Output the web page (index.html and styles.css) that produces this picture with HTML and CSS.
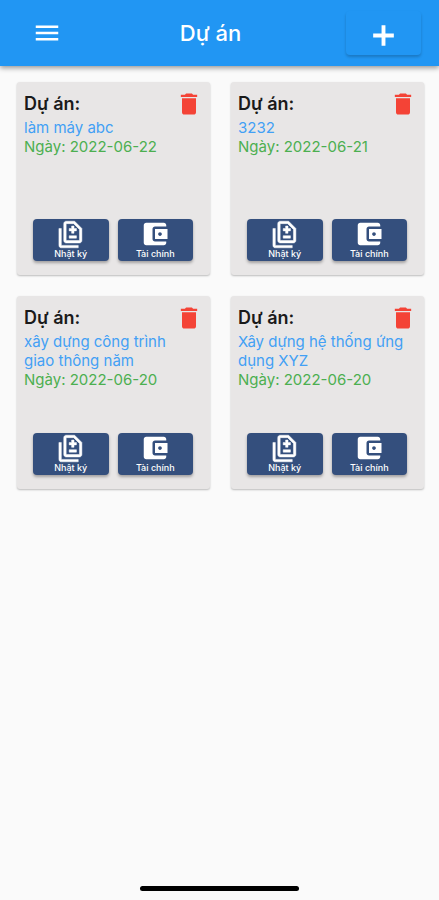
FILE: index.html
```html
<!DOCTYPE html>
<html lang="vi">
<head>
<meta charset="utf-8">
<meta name="viewport" content="width=device-width, initial-scale=1">
<title>Dự án</title>
<link rel="stylesheet" href="styles.css">
</head>
<body>
<svg class="sprite" aria-hidden="true">
  <symbol id="trash" viewBox="0 0 24 24"><path d="M6 19c0 1.100.9 2 2 2h8c1.100 0 2-.9 2-2V7H6v12zM19 4h-3.500l-1-1h-5l-1 1H5v2h14V4z"/></symbol>
  <symbol id="diary" viewBox="0 0 24 24"><path d="M18 23H4c-1.100 0-2-.9-2-2V7h2v14h14v2zM14.500 7V5h-2v2h-2v2h2v2h2V9h2V7h-2zM16.500 13h-6v2h6v-2zM15 1H8C6.900 1 6 1.900 6 3v14c0 1.100.9 2 2 2h11c1.100 0 2-.9 2-2V7l-6-6zM19 17H8V3h6.170L19 7.830V17z"/></symbol>
  <symbol id="wallet" viewBox="0 0 24 24"><path d="M21 18v1c0 1.100-.9 2-2 2H5c-1.110 0-2-.9-2-2V5c0-1.100.89-2 2-2h14c1.100 0 2 .9 2 2v1h-9c-1.110 0-2 .9-2 2v8c0 1.100.89 2 2 2h9zm-9-2h10V8H12v8zm4-2.500c-.83 0-1.500-.67-1.500-1.500s.67-1.500 1.500-1.500 1.500.67 1.500 1.500-.67 1.500-1.500 1.500z"/></symbol>
</svg>
<header class="bar">
  <button class="menu" aria-label="Menu"><svg viewBox="0 0 24 24"><path d="M3 18h18v-2H3v2zm0-5h18v-2H3v2zm0-7v2h18V6H3z"/></svg></button>
  <h1 class="title">Dự án</h1>
  <button class="add" aria-label="Thêm"><svg viewBox="0 0 24 24"><path d="M10.500 4h3v6.500H20v3h-6.500V20h-3v-6.500H4v-3h6.500z"/></svg></button>
</header>
<main class="grid">
  <article class="card">
    <div class="head"><h2 class="label">Dự án:</h2><button class="delete" aria-label="Xóa"><svg><use href="#trash"/></svg></button></div>
    <p class="name">làm máy abc</p>
    <p class="date">Ngày: 2022-06-22</p>
    <div class="actions"><button class="action"><svg class="diary"><use href="#diary"/></svg>Nhật ký</button><button class="action"><svg><use href="#wallet"/></svg>Tài chính</button></div>
  </article>
  <article class="card">
    <div class="head"><h2 class="label">Dự án:</h2><button class="delete" aria-label="Xóa"><svg><use href="#trash"/></svg></button></div>
    <p class="name">3232</p>
    <p class="date">Ngày: 2022-06-21</p>
    <div class="actions"><button class="action"><svg class="diary"><use href="#diary"/></svg>Nhật ký</button><button class="action"><svg><use href="#wallet"/></svg>Tài chính</button></div>
  </article>
  <article class="card">
    <div class="head"><h2 class="label">Dự án:</h2><button class="delete" aria-label="Xóa"><svg><use href="#trash"/></svg></button></div>
    <p class="name">xây dựng công trình giao thông năm</p>
    <p class="date">Ngày: 2022-06-20</p>
    <div class="actions"><button class="action"><svg class="diary"><use href="#diary"/></svg>Nhật ký</button><button class="action"><svg><use href="#wallet"/></svg>Tài chính</button></div>
  </article>
  <article class="card">
    <div class="head"><h2 class="label">Dự án:</h2><button class="delete" aria-label="Xóa"><svg><use href="#trash"/></svg></button></div>
    <p class="name">Xây dựng hệ thống ứng dụng XYZ</p>
    <p class="date">Ngày: 2022-06-20</p>
    <div class="actions"><button class="action"><svg class="diary"><use href="#diary"/></svg>Nhật ký</button><button class="action"><svg><use href="#wallet"/></svg>Tài chính</button></div>
  </article>
</main>
<footer class="foot"><div class="home"></div></footer>
</body>
</html>
```
FILE: styles.css
```css
* { box-sizing: border-box; }
body {
  margin: 0;
  min-height: 100vh;
  display: flex;
  flex-direction: column;
  background: #fafafa;
  font-family: Inter, "Liberation Sans", sans-serif;
}
h1, h2, p { margin: 0; }
button {
  border: 0;
  padding: 0;
  background: none;
  font: inherit;
  color: inherit;
  cursor: pointer;
}
svg { display: block; fill: currentColor; }
.sprite { position: absolute; width: 0; height: 0; }
.bar {
  display: grid;
  grid-template-columns: 1fr auto 1fr;
  align-items: center;
  height: 66px;
  padding-right: 18px;
  background: #2196f3;
  color: #fff;
  box-shadow: 0 2px 5px rgba(0, 0, 0, .4);
}
.menu { justify-self: start; margin-left: 32px; }
.menu svg { width: 30px; height: 30px; }
.title { font-size: 22px; line-height: 28px; font-weight: 500; }
.add {
  justify-self: end;
  display: grid;
  place-items: center;
  width: 75px;
  height: 44px;
  padding-top: 4px;
  border-radius: 4px;
  box-shadow: 0 2px 3px rgba(0, 0, 0, .2);
}
.add svg { width: 31px; height: 31px; }
.grid {
  display: grid;
  grid-template-columns: 1fr 1fr;
  gap: 21px;
  padding: 16px 15px 16px 17px;
}
.card {
  display: flex;
  flex-direction: column;
  aspect-ratio: 1;
  padding: 7px 7px 14px;
  border-radius: 3px;
  background: #e8e6e6;
  box-shadow: 0 1px 2px rgba(0, 0, 0, .25);
}
.head { display: flex; justify-content: space-between; align-items: center; height: 29px; }
.label { font-size: 18px; line-height: 24px; font-weight: 600; color: #1a1a1a; }
.delete { color: #f44336; }
.delete svg { width: 28px; height: 28px; }
.name, .date { font-size: 15px; line-height: 19px; }
.name { padding-right: 6px; color: #42a0f5; }
.date { color: #4caf50; }
.actions { display: flex; gap: 9px; margin-top: auto; padding: 0 10px 0 9px; }
.action {
  flex: 1;
  display: flex;
  flex-direction: column;
  align-items: center;
  height: 42px;
  border-radius: 4px;
  background: #344f7d;
  color: #fff;
  font-size: 9px;
  line-height: 10px;
  font-weight: 500;
  box-shadow: 0 2px 3px rgba(0, 0, 0, .3);
}
.action svg { width: 30px; height: 30px; }
.action .diary { stroke: currentColor; stroke-width: .4; padding-top: 1px; }
.foot { display: flex; justify-content: center; margin-top: auto; padding-bottom: 9px; }
.home { width: 36%; height: 5px; border-radius: 3px; background: #000; }
```
